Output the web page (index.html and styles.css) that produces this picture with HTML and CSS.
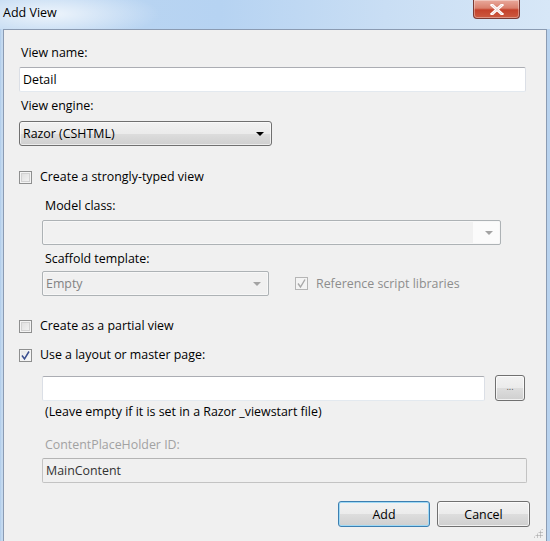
FILE: index.html
```html
<!DOCTYPE html>
<html>
<head>
<meta charset="utf-8">
<link rel="stylesheet" href="styles.css">
</head>
<body>
<div class="window">
  <div class="titlebar">
    <span class="title">Add View</span>
    <div class="close"><svg width="14" height="11" viewBox="0 0 14 11"><path d="M2 1 L12 10 M12 1 L2 10" stroke="#fff" stroke-width="3" stroke-linecap="square"/><path d="M2 1 L12 10 M12 1 L2 10" stroke="#b84a3a" stroke-width="0.6" opacity="0.4"/></svg></div>
  </div>
  <div class="client">
    <div class="label l-name">View name:</div>
    <div class="textbox tb-name">Detail</div>
    <div class="label l-engine">View engine:</div>
    <div class="combo engine"><span>Razor (CSHTML)</span><span class="arrow"></span></div>

    <div class="check-row r-strong"><span class="cb"></span><span>Create a strongly-typed view</span></div>
    <div class="indent">
      <div class="label l-model">Model class:</div>
      <div class="dcombo model"><span></span><span class="darrow"></span></div>
      <div class="label l-scaffold">Scaffold template:</div>
      <div class="scaffold-row">
        <div class="dcombo empty"><span>Empty</span><span class="darrow"></span></div>
        <div class="check-row disabled"><span class="cb checked dis"><svg width="11" height="11" viewBox="0 0 11 11"><path d="M2 5.5 L4.5 9 L9 1.5" fill="none" stroke="#a8a8a8" stroke-width="1.4"/></svg></span><span>Reference script libraries</span></div>
      </div>
    </div>

    <div class="check-row r-partial"><span class="cb"></span><span>Create as a partial view</span></div>
    <div class="check-row r-layout"><span class="cb checked"><svg width="11" height="11" viewBox="0 0 11 11"><path d="M2 5.5 L4.5 9 L9 1.5" fill="none" stroke="#3b4f8f" stroke-width="1.5"/></svg></span><span>Use a layout or master page:</span></div>
    <div class="indent">
      <div class="layout-row">
        <div class="textbox tb-layout"></div>
        <div class="btn browse">...</div>
      </div>
      <div class="label l-leave">(Leave empty if it is set in a Razor _viewstart file)</div>
      <div class="label l-cph">ContentPlaceHolder ID:</div>
      <div class="textbox tb-cph">MainContent</div>
    </div>

    <div class="buttons">
      <div class="btn default">Add</div>
      <div class="btn">Cancel</div>
    </div>
    <div class="grip"></div>
  </div>
</div>
</body>
</html>
```
FILE: styles.css
```css
* { box-sizing: border-box; }
html, body { margin: 0; padding: 0; }
body {
  width: 550px;
  height: 541px;
  overflow: hidden;
  font-family: "Open Sans", "Noto Sans", sans-serif;
  font-size: 12.4px;
  color: #000;
}
.window {
  width: 550px;
  height: 541px;
  display: flex;
  flex-direction: column;
  background: linear-gradient(90deg, #aecbe9 0px, #c8dcf1 2px, #b8d2ee 4px);
  padding: 0 3px 0 3px;
  position: relative;
}
.titlebar {
  height: 29px;
  margin: 0 -3px;
  position: relative;
  background:
    radial-gradient(ellipse 110px 26px at 50px 14px, rgba(255,255,255,0.75), rgba(255,255,255,0) 100%),
    linear-gradient(90deg, #bcd6f1 0%, #b6d3f2 40%, #c9def4 70%, #d7e7f7 100%);
}
.title {
  position: absolute;
  left: 3px;
  top: 4px;
  font-family: "Open Sans", sans-serif;
  font-size: 12.5px;
  color: #000;
}
.close {
  position: absolute;
  left: 473px;
  top: 0;
  width: 47px;
  height: 19px;
  border: 1px solid #7a3a34;
  border-top: none;
  border-radius: 0 0 4px 4px;
  background: linear-gradient(180deg, #e9a99c 0%, #d9806d 45%, #c4412b 55%, #cc5a40 100%);
  display: flex;
  align-items: center;
  justify-content: center;
  box-shadow: inset 0 0 0 1px rgba(255,255,255,0.35);
}
.client {
  flex: 1;
  position: relative;
  background: #f0f0f0;
  border: 1px solid #8b9bb2;
  border-bottom: none;
  padding: 15px 0 0 15px;
  display: flex;
  flex-direction: column;
  align-items: flex-start;
}
.label { line-height: 16px; height: 16px; white-space: nowrap; }
.textbox {
  height: 25px;
  background: #fff;
  border: 1px solid #dbdfe6;
  border-top-color: #abadb3;
  border-bottom-color: #e3e9ef;
  border-radius: 2px;
  padding: 0 3px;
  line-height: 23px;
}
.l-name { margin-left: 2px; }
.tb-name { margin-top: 6px; width: 507px; }
.l-engine { margin-top: 6px; margin-left: 2px; }
.combo {
  margin-top: 7px;
  width: 253px;
  height: 25px;
  border: 1px solid #707070;
  border-radius: 3px;
  background: linear-gradient(180deg, #f2f2f2 0%, #ebebeb 50%, #dddddd 51%, #cfcfcf 100%);
  display: flex;
  align-items: center;
  justify-content: space-between;
  padding: 0 7px 0 3px;
  box-shadow: inset 0 0 0 1px rgba(255,255,255,0.6);
}
.arrow {
  width: 0; height: 0;
  border-left: 4px solid transparent;
  border-right: 4px solid transparent;
  border-top: 4px solid #000;
}
.check-row {
  display: flex;
  align-items: center;
  height: 16px;
  line-height: 16px;
  white-space: nowrap;
}
.cb {
  width: 13px;
  height: 13px;
  border: 1px solid #8e8f8f;
  background: linear-gradient(135deg, #dcdcdc 0%, #f6f6f6 100%);
  box-shadow: inset 0 0 0 1px #f4f4f4, inset 0 0 0 2px #d2d2d2;
  margin-right: 8px;
  display: flex;
  align-items: center;
  justify-content: center;
  flex: none;
}
.cb.checked {
  background: linear-gradient(135deg, #e6e6e6 0%, #fbfbfb 100%);
  box-shadow: inset 0 0 0 1px #f4f4f4;
}
.cb.dis { border-color: #b5b5b5; background: #f4f4f4; }
.check-row.disabled { color: #8d8d8d; margin-left: 26px; }
.r-strong { margin-top: 23px; }
.indent {
  margin-left: 23px;
  display: flex;
  flex-direction: column;
  align-items: flex-start;
}
.l-model { margin-top: 13px; margin-left: 3px; }
.dcombo {
  height: 25px;
  border: 1px solid #adb2b5;
  border-radius: 2px;
  background: #f4f4f4;
  display: flex;
  align-items: center;
  justify-content: space-between;
  padding: 0 7px 0 3px;
  color: #838383;
  box-shadow: inset 0 0 0 1px #f7f7f7;
}
.darrow {
  width: 0; height: 0;
  border-left: 4px solid transparent;
  border-right: 4px solid transparent;
  border-top: 4px solid #a3a3a3;
}
.model { margin-top: 6px; width: 459px; background: linear-gradient(90deg, #f1f1f1 0%, #f1f1f1 94%, #fbfbfb 94%); }
.l-scaffold { margin-top: 6px; margin-left: 3px; }
.scaffold-row { display: flex; align-items: center; margin-top: 4px; }
.empty { width: 227px; background: #f0f0f0; }
.r-partial { margin-top: 22px; }
.r-layout { margin-top: 13px; }
.layout-row { display: flex; align-items: center; margin-top: 12px; }
.tb-layout { width: 443px; }
.btn {
  height: 26px;
  border: 1px solid #707070;
  border-radius: 3px;
  background: linear-gradient(180deg, #f2f2f2 0%, #ebebeb 50%, #dddddd 51%, #cfcfcf 100%);
  box-shadow: inset 0 0 0 1px rgba(255,255,255,0.7);
  display: flex;
  align-items: center;
  justify-content: center;
}
.browse { width: 30px; margin-left: 10px; color: #555; font-size: 9px; padding-bottom: 3px; }
.l-leave { margin-top: 3px; margin-left: 3px; }
.l-cph { margin-top: 17px; margin-left: 3px; color: #a2a2a2; }
.tb-cph { margin-top: 5px; width: 485px; background: #f0f0f0; border: 1px solid #c3c3c3; border-top-color: #b4b4b4; color: #333; }
.buttons {
  display: flex;
  gap: 7px;
  margin-top: 18px;
  margin-left: 319px;
}
.buttons .btn { width: 93px; }
.buttons .default { width: 92px; border-color: #3c7fb1; box-shadow: inset 0 0 0 1px #9fd9f5; }
.grip {
  position: absolute;
  right: 3px;
  bottom: 3px;
  width: 10px;
  height: 10px;
  background-image: radial-gradient(circle, #b0b0b0 0.9px, transparent 1.2px);
  background-size: 3px 3px;
  clip-path: polygon(100% 0, 100% 100%, 0 100%);
}
```
